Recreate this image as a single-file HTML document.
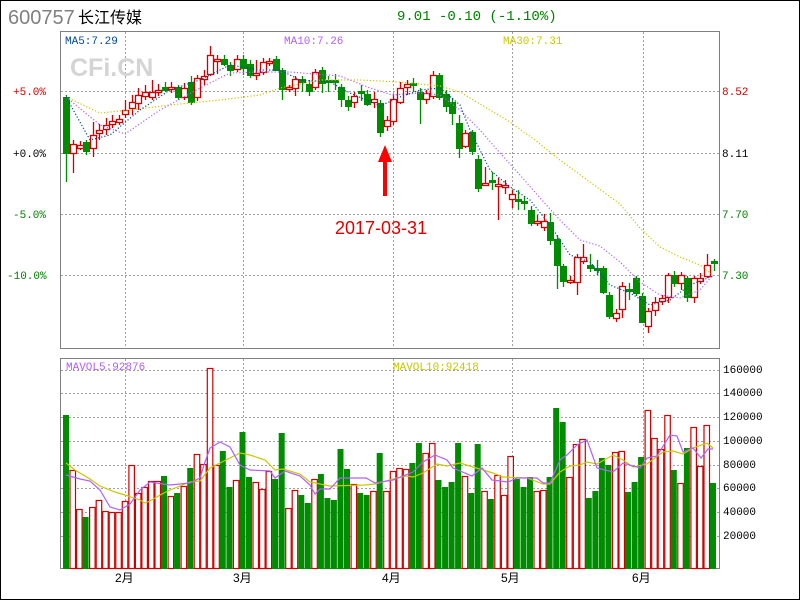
<!DOCTYPE html>
<html><head><meta charset="utf-8"><style>
html,body{margin:0;padding:0;background:#fff;}
#w{position:relative;width:800px;height:600px;overflow:hidden;}
svg{position:absolute;left:0;top:0;}
</style></head><body><div id="w">
<svg id="s" width="800" height="600" xmlns="http://www.w3.org/2000/svg" font-family="Liberation Mono, monospace">
<rect x="0.5" y="0.5" width="799" height="599" fill="#fff" stroke="#000"/>
<text x="8" y="24" font-family="Liberation Sans, sans-serif" font-size="20" fill="#808080">600757</text>
<text x="78" y="23" font-family="Liberation Sans, 'Noto Sans CJK SC', sans-serif" font-size="16" fill="#000">长江传媒</text>
<text x="397" y="20" font-size="14" fill="#008000">9.01 -0.10 (-1.10%)</text>
<g id="grid" stroke="#a0a0a0" stroke-dasharray="2 2" fill="none"></g>
<rect x="60.5" y="31.5" width="659" height="317" fill="none" stroke="#808080"/>
<rect x="60.5" y="358.5" width="659" height="210" fill="none" stroke="#808080"/>
<text x="70" y="76" font-family="Liberation Sans, sans-serif" font-weight="bold" font-size="25" fill="#d4d4d4">CFi.CN</text>
<text x="65" y="44" font-size="11" fill="#004a9c">MA5:7.29</text>
<text x="284" y="44" font-size="11" fill="#b060ff">MA10:7.26</text>
<text x="503" y="44" font-size="11" fill="#c8c800">MA30:7.31</text>
<text x="66" y="370" font-size="11" fill="#b060ff">MAVOL5:92876</text>
<text x="393" y="370" font-size="11" fill="#c8c800">MAVOL10:92418</text>
<g font-size="11">
<text x="13" y="95" fill="#d00000">+5.0%</text>
<text x="13" y="157" fill="#000">+0.0%</text>
<text x="13" y="218" fill="#008000">-5.0%</text>
<text x="7" y="279" fill="#008000">-10.0%</text>
<text x="722" y="95" fill="#d00000">8.52</text>
<text x="722" y="157" fill="#000">8.11</text>
<text x="722" y="218" fill="#008000">7.70</text>
<text x="722" y="279" fill="#008000">7.30</text>
<text x="723" y="373">160000</text><text x="723" y="396">140000</text>
<text x="723" y="420">120000</text><text x="723" y="444">100000</text>
<text x="723" y="468">80000</text><text x="723" y="491">60000</text>
<text x="723" y="515">40000</text><text x="723" y="539">20000</text>
</g>
<g font-family="Liberation Sans, 'Noto Sans CJK SC', sans-serif" font-size="12" fill="#000">
<text x="115" y="582">2月</text><text x="233" y="582">3月</text><text x="382" y="582">4月</text><text x="501" y="582">5月</text><text x="632" y="582">6月</text>
</g>
<g id="c"></g>
<path d="M383 196 V162 H378 L385 145 L392 162 H387 V196 Z" fill="#f00"/>
<text x="335" y="234" font-family="Liberation Sans, sans-serif" font-size="18" fill="#e00000">2017-03-31</text>
</svg></div>
<script>
var g=document.getElementById('grid'),c=document.getElementById('c'),h='';
[125,243,393,512,643].forEach(function(x){h+='<line x1="'+(x+.5)+'" y1="32" x2="'+(x+.5)+'" y2="348"/><line x1="'+(x+.5)+'" y1="359" x2="'+(x+.5)+'" y2="568"/>';});
[91,153,214,275].forEach(function(y){h+='<line x1="61" y1="'+(y+.5)+'" x2="719" y2="'+(y+.5)+'"/>';});
[370,393,417,441,465,488,512,536].forEach(function(y){h+='<line x1="61" y1="'+(y+.5)+'" x2="719" y2="'+(y+.5)+'"/>';});
g.innerHTML=h;
var R='#d00000',G='#008c00';
var K=[[66,97,153,'g',95,182],[73,144,153,'r',140,173],[80,145,148,'r',141,150],[86,142,151,'g',140,155],[93,135,148,'r',122,157],[99,130,133,'r',124,140],[106,125,129,'r',118,135],[112,121,124,'r',115,128],[119,119,122,'r',115,125],[125,110,114,'r',100,118],[132,102,108,'r',95,115],[138,95,103,'r',88,110],[145,92,96,'r',85,100],[152,92,97,'r',80,100],[158,90,92,'r',84,96],[165,87,90,'g',82,92],[171,87,89,'r',82,93],[178,87,97,'g',85,100],[184,88,97,'r',83,100],[191,82,102,'g',76,105],[197,78,97,'r',75,101],[204,76,79,'r',70,85],[210,55,74,'r',46,76],[217,59,61,'r',55,74],[224,59,64,'g',55,66],[230,65,70,'g',62,76],[237,59,69,'r',55,72],[243,59,68,'g',55,75],[250,64,75,'g',60,78],[256,73,75,'r',60,80],[263,62,72,'r',58,75],[269,61,63,'r',58,66],[276,59,70,'g',56,71],[282,70,89,'g',68,100],[289,87,89,'r',85,92],[295,79,88,'r',76,96],[302,79,82,'g',76,92],[309,84,91,'g',80,96],[315,72,87,'r',69,90],[322,70,83,'g',67,93],[328,80,82,'g',76,92],[335,80,82,'g',74,90],[341,87,99,'g',84,107],[348,100,106,'g',96,111],[354,96,102,'r',92,108],[361,91,93,'g',85,101],[367,94,104,'g',90,106],[374,99,102,'r',92,108],[380,103,132,'g',100,137],[387,120,126,'r',116,131],[393,99,121,'r',94,125],
[400,88,102,'r',82,104],[407,84,87,'r',80,95],[413,83,85,'g',78,92],[420,92,99,'g',88,124],[426,93,99,'r',90,104],[433,75,96,'r',71,99],[439,75,97,'g',73,100],[446,94,106,'g',90,112],[452,102,113,'g',98,125],[459,123,148,'g',115,158],[465,133,146,'r',130,148],[472,132,151,'g',130,155],[478,159,188,'g',155,192],[485,183,185,'r',167,186],[492,180,182,'g',172,190],[498,184,186,'r',178,220],[505,185,187,'r',180,194],[512,194,199,'r',190,208],[518,199,201,'g',190,210],[524,201,203,'g',196,210],[531,210,223,'g',206,226],[537,221,223,'r',215,226],[544,221,227,'r',214,231],[550,222,240,'g',213,245],[557,239,265,'g',235,289],[563,266,281,'g',264,287],[570,280,282,'r',276,284],[577,257,282,'r',254,295],[583,257,261,'r',244,264],[590,265,268,'g',254,272],[597,268,270,'g',260,275],[603,268,292,'g',266,294],[609,295,316,'g',292,319],[616,313,318,'r',309,322],[622,286,309,'r',282,318],[629,289,291,'g',283,300],[636,278,293,'g',276,296],[642,296,322,'g',293,322],[648,311,326,'r',308,333],[655,302,310,'r',297,316],[662,298,301,'r',295,305],[668,275,297,'r',273,303],[674,275,283,'g',271,287],[681,275,283,'r',272,290],[687,278,297,'g',276,302],[694,278,297,'r',276,303],[700,278,281,'r',273,284],[707,265,276,'r',254,278],[714,261,263,'g',259,271]];
var s='';
K.forEach(function(k){var x=k[0],col=k[3]=='r'?R:G;
s+='<line x1="'+(x+.5)+'" y1="'+k[4]+'" x2="'+(x+.5)+'" y2="'+k[5]+'" stroke="'+col+'" stroke-width="1.3"/>';
var hh=Math.max(k[2]-k[1],1);
if(k[3]=='r')s+='<rect x="'+(x-2.5)+'" y="'+(k[1]+.5)+'" width="6" height="'+hh+'" fill="#fff" stroke="'+R+'" stroke-width="1.3"/>';
else s+='<rect x="'+(x-3)+'" y="'+k[1]+'" width="7" height="'+(hh+1)+'" fill="'+G+'"/>';});
var V='g415 r470 r509 g517 r507 r500 r511 r512 r512 r501 r465 r493 r487 r481 r481 g476 r496 g493 r486 g468 r454 r464 r368 r465 g451 g487 r480 g432 g477 r482 r489 r471 g479 g433 r508 r490 g495 g503 r479 g474 g498 g500 g449 g469 r484 g493 g495 r491 g453 r491 r471 r468 r469 g463 g443 r453 r443 g480 g487 g482 g443 r476 g493 g444 r491 g499 r475 r495 r456 g479 g487 g477 r491 r490 g477 g408 g422 r477 r444 r439 g498 g491 g458 g465 r452 r451 g492 g482 g457 r410 r438 r449 r415 g470 r483 g448 r427 r466 r425 g483'.split(' ');
var n=V.length;
V.forEach(function(v,i){var x=66+i*(713-66)/(n-1),y=+v.slice(1);
if(v[0]=='r')s+='<rect x="'+(x-2.5).toFixed(1)+'" y="'+(y+.5)+'" width="5.5" height="'+(568-y)+'" fill="#fff" stroke="'+R+'" stroke-width="1.2"/>';
else s+='<rect x="'+(x-3).toFixed(1)+'" y="'+y+'" width="6" height="'+(569-y)+'" fill="'+G+'"/>';});
function pl(p,col,dash){return '<polyline points="'+p+'" fill="none" stroke="'+col+'" stroke-width="1.2"'+(dash?' stroke-dasharray="1.2 2"':'')+'/>';}
s+=pl('66,97 100,113 130,110 170,105 220,100 260,95 280,88 320,80 360,80 400,82 440,86 460,92 480,104 510,122 535,140 560,160 590,182 620,204 640,228 660,247 680,257 700,265 713,275','#c8c800',1);
s+=pl('66,97 100,125 125,134 160,110 200,88 230,73 260,72 290,72 340,76 370,88 392,95 420,93 440,95 460,110 480,130 500,153 520,175 540,198 560,220 580,240 600,246 620,262 640,282 660,295 680,298 700,290 713,275','#b060ff',1);
s+=pl('66,97 90,140 110,135 140,110 170,90 200,80 230,65 260,70 280,70 300,80 330,82 350,93 380,106 400,97 420,90 440,88 460,105 470,130 490,170 510,187 530,200 550,225 570,255 590,262 610,285 630,293 650,305 670,300 690,285 713,276','#004a9c',1);
s+=pl('66,463 75,470 90,479 100,486 115,492 125,495 140,500 145,503 150,501 160,495 170,490 190,482 200,481 210,468 220,463 240,453 250,455 265,460 275,470 283,469 300,474 310,482 320,484 330,486 365,485 375,484 397,478 407,476 413,477 423,473 437,464 447,466 460,463 473,467 493,473 503,477 527,478 543,484 550,484 560,472 570,466 580,465 587,462 597,464 613,455 623,460 633,467 647,464 663,452 673,451 683,454 693,448 707,443 713,448','#c8c800');
s+=pl('66,475 80,479 90,481 100,490 110,507 120,510 130,504 140,490 150,482 170,485 190,483 200,478 205,462 210,448 220,442 230,447 240,465 250,470 270,471 275,478 285,471 300,476 310,485 315,494 320,489 330,489 340,478 366,478 375,483 393,480 413,472 423,462 435,455 447,460 453,468 472,476 482,468 492,480 508,482 517,478 537,478 543,483 550,483 560,460 567,455 577,445 587,440 597,468 613,472 623,463 640,468 647,458 657,456 670,435 677,436 683,452 693,448 701,458 708,449 713,449','#b060ff');
c.innerHTML=s;
</script>
</body></html>
